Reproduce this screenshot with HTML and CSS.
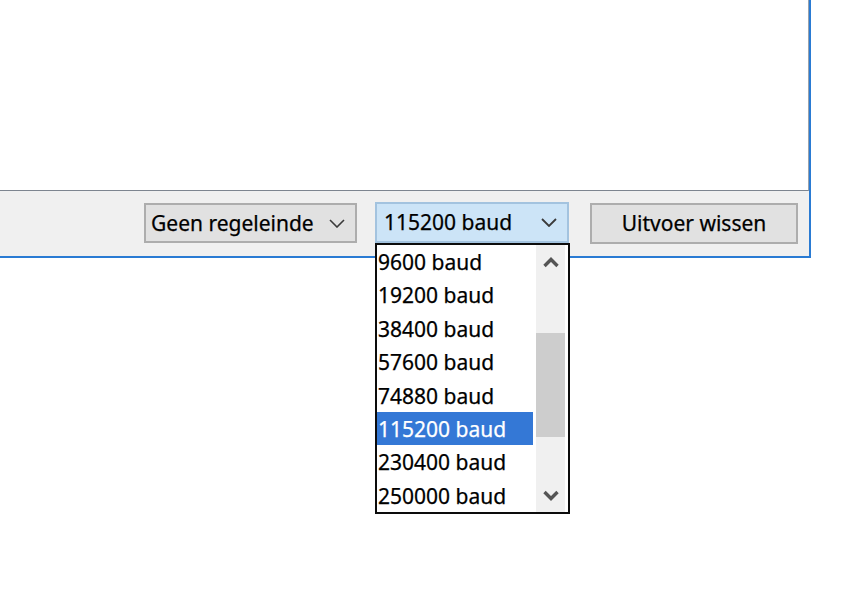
FILE: index.html
```html
<!DOCTYPE html>
<html lang="nl">
<head>
<meta charset="utf-8">
<title>Seriële monitor</title>
<link rel="stylesheet" href="styles.css">
</head>
<body>
<div class="window">
  <div class="output"></div>
  <div class="bar">
    <div class="combo combo-line">
      <span class="combo-text">Geen regeleinde</span>
      <svg class="chev" width="16" height="9" viewBox="0 0 16 9"><path d="M1 1 L8 8 L15 1" fill="none" stroke="#3a3a3a" stroke-width="1.6"/></svg>
    </div>
    <div class="combo-wrap">
      <div class="combo combo-open">
        <span class="combo-text">115200 baud</span>
        <svg class="chev" width="16" height="9" viewBox="0 0 16 9"><path d="M1 1 L8 8 L15 1" fill="none" stroke="#3a3a3a" stroke-width="1.8"/></svg>
      </div>
      <div class="dropdown">
        <ul class="items">
          <li>9600 baud</li>
          <li>19200 baud</li>
          <li>38400 baud</li>
          <li>57600 baud</li>
          <li>74880 baud</li>
          <li class="selected">115200 baud</li>
          <li>230400 baud</li>
          <li>250000 baud</li>
        </ul>
        <div class="scrollbar">
          <div class="arrow arrow-up"><svg width="18" height="12" viewBox="0 0 18 12"><path d="M2.5 10 L9 3.5 L15.5 10" fill="none" stroke="#555555" stroke-width="3.4"/></svg></div>
          <div class="track">
            <div class="thumb"></div>
          </div>
          <div class="arrow arrow-down"><svg width="18" height="12" viewBox="0 0 18 12"><path d="M2.5 2 L9 8.5 L15.5 2" fill="none" stroke="#555555" stroke-width="3.4"/></svg></div>
        </div>
      </div>
    </div>
    <button class="btn">Uitvoer wissen</button>
  </div>
</div>
</body>
</html>
```

FILE: styles.css
```css
* { box-sizing: border-box; }

html, body {
  height: 100%;
}

body {
  margin: 0;
  min-height: 606px;
  background: #ffffff;
  font-family: "Noto Sans", "Open Sans", "DejaVu Sans", sans-serif;
  font-size: 21px;
  color: #000000;
  -webkit-text-stroke: 0.25px currentColor;
}

.window {
  position: relative;
  width: 811px;
  height: 258px;
  border-right: 2px solid #2a7bd3;
  border-bottom: 2px solid #2a7bd3;
  display: flex;
  flex-direction: column;
}

.output {
  height: 191px;
  background: #ffffff;
  border-bottom: 1px solid #7d8590;
  border-right: 1px solid #9aa2ab;
}

.bar {
  height: 65px;
  background: #f0f0f0;
  display: flex;
  align-items: flex-start;
  justify-content: flex-end;
  padding-top: 11px;
  padding-right: 11px;
}

.combo {
  height: 41px;
  display: flex;
  align-items: center;
  justify-content: space-between;
  border: 2px solid #adadad;
  background: #e1e1e1;
  line-height: 1;
}

.combo-line {
  width: 213px;
  margin-top: 1px;
  height: 40px;
  padding: 0 10px 0 5px;
}

.combo-wrap {
  position: relative;
  margin-left: 18px;
  z-index: 5;
}

.combo-open {
  width: 194px;
  background: #cce4f7;
  border-color: #a3c3df;
  padding: 0 10px 0 7px;
}

.combo-text { white-space: nowrap; }

.chev { display: block; flex: none; }

.btn {
  margin-left: 21px;
  margin-top: 1px;
  width: 208px;
  height: 41px;
  border: 2px solid #adadad;
  background: #e1e1e1;
  font: inherit;
  color: #000000;
  padding: 0 0 0 -2px;
  line-height: 1;
}

.dropdown {
  position: absolute;
  left: 0;
  top: 41px;
  width: 195px;
  height: 271px;
  background: #ffffff;
  border: 2px solid #0c0c0c;
  display: flex;
  padding: 0 2px 0 0;
}

.items {
  list-style: none;
  margin: 0;
  padding: 0;
  width: 156px;
  margin-right: 3px;
}

.items li {
  height: 33.4px;
  line-height: 34.4px;
  padding-left: 1px;
  white-space: nowrap;
}

.items li.selected {
  background: #3478d6;
  color: #ffffff;
}

.scrollbar {
  width: 29px;
  background: #f0f0f0;
  display: flex;
  flex-direction: column;
}

.arrow {
  height: 33px;
  display: flex;
  align-items: center;
  justify-content: center;
  flex: none;
}

.track {
  flex: 1;
  padding-top: 55px;
}

.thumb {
  height: 104px;
  background: #cdcdcd;
}
```
